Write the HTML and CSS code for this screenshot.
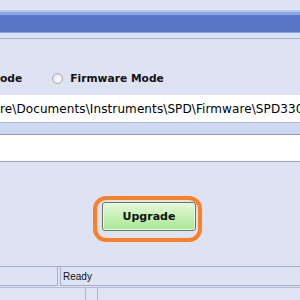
FILE: index.html
```html
<!DOCTYPE html>
<html lang="en">
<head>
    <meta charset="UTF-8">
    <meta name="viewport" content="width=device-width, initial-scale=1.0">
    <title>Firmware Upgrade</title>
    <link rel="stylesheet" href="styles.css">
</head>
<body>

<div class="window">
    <div class="top-gap"></div>
    <div class="titlebar"></div>
    <div class="title-sep"></div>

    <div class="mode-row">
        <span class="mode-label">ode</span>
        <span class="radio"></span>
        <span class="mode-label">Firmware Mode</span>
    </div>

    <div class="field path-field">re\Documents\Instruments\SPD\Firmware\SPD330</div>
    <div class="band"></div>
    <div class="field log-field"></div>

    <div class="button-wrap">
        <div class="highlight">
            <button class="upgrade-btn" type="button">Upgrade</button>
        </div>
    </div>

    <div class="statusbar">
        <div class="status-cell status-left"></div>
        <div class="status-cell status-ready">Ready</div>
    </div>
    <div class="status-under">
        <div class="strip-cell strip-a"></div>
        <div class="strip-cell strip-b"></div>
        <div class="strip-cell strip-c"></div>
    </div>
</div>

</body>
</html>
```

FILE: styles.css
```css
body {
    margin: 0;
    font-family: "DejaVu Sans", Verdana, sans-serif;
    background-color: #dde3f3;
    overflow: hidden;
}
.window {
    width: 300px;
    height: 300px;
    display: flex;
    flex-direction: column;
    background-color: #dde3f3;
    overflow: hidden;
}
.top-gap {
    height: 10px;
}
.titlebar {
    height: 23px;
    background: linear-gradient(#b2c8f1 0, #b2c8f1 2px, #8ba4df 2px, #8ba4df 5px, #5977c7 5px, #5a77c6 22px, #8fa3d8 22px);
}
.title-sep {
    height: 5px;
    background-color: #d9e1f5;
    border-bottom: 1px solid #a9b2cf;
}
.mode-row {
    display: flex;
    align-items: center;
    height: 16px;
    margin-top: 31px;
    font-size: 10.7px;
    font-weight: bold;
    color: #111;
    white-space: nowrap;
}
.radio {
    width: 9px;
    height: 9px;
    margin-left: 30px;
    margin-right: 7px;
    border: 1px solid #a7abb8;
    border-radius: 50%;
    background: radial-gradient(circle at 60% 60%, #ffffff 0, #f4f4f6 35%, #d2d4dc 100%);
}
.field {
    background-color: #fff;
    white-space: nowrap;
    overflow: hidden;
}
.path-field {
    height: 27px;
    margin-top: 9px;
    line-height: 28px;
    font-size: 12px;
    letter-spacing: 0.1px;
    color: #000;
    border-bottom: 1px solid #b4bad0;
}
.band {
    height: 11px;
    background-color: #cfd8f1;
    border-bottom: 1px solid #9098c6;
}
.log-field {
    height: 26px;
    border-bottom: 1px solid #9aa2c6;
}
.button-wrap {
    display: flex;
    margin-top: 34px;
    padding-left: 93px;
}
.highlight {
    border: 4px solid #ff7f22;
    border-radius: 13px;
    padding: 2px 2px 7px 5px;
}
.upgrade-btn {
    display: block;
    width: 94px;
    height: 29px;
    padding: 0;
    font-family: "DejaVu Sans", Verdana, sans-serif;
    font-size: 11px;
    font-weight: bold;
    color: #111;
    border: 1px solid #667766;
    border-radius: 3px;
    background: linear-gradient(#e6f8dc, #c6f0b4 50%, #a9e792);
    box-shadow: inset 0 0 0 1px #e9fbe0;
}
.statusbar {
    display: flex;
    margin-top: auto;
    height: 19px;
    border-top: 1px solid #a6aec8;
    margin-bottom: 1px;
}
.status-cell {
    border-bottom: 1px solid #a6aec8;
}
.status-left {
    width: 57px;
    border-right: 1px solid #a6aec8;
}
.status-ready {
    flex: 1;
    margin-left: 2px;
    padding-left: 2px;
    border-left: 1px solid #a6aec8;
    font-family: "Liberation Sans", Arial, sans-serif;
    font-size: 10px;
    line-height: 19px;
    color: #111;
}
.status-under {
    display: flex;
    height: 12px;
    border-top: 1px solid #b3bad0;
    background-color: #dfe4f4;
}
.strip-a {
    width: 85px;
    border-right: 1px solid #b3bad0;
}
.strip-b {
    width: 11px;
    border-right: 1px solid #b3bad0;
}
.strip-c {
    flex: 1;
}
```
